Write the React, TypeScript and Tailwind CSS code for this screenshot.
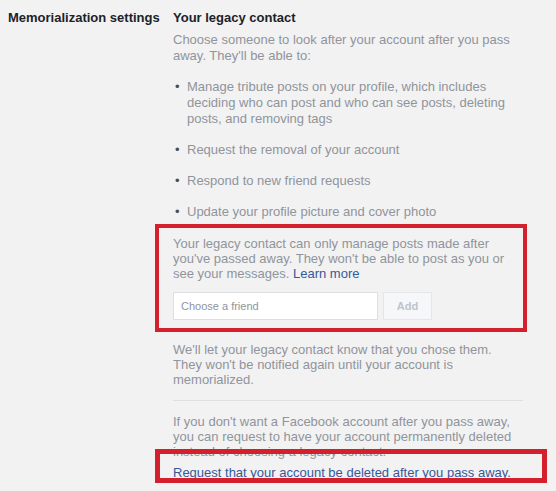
import React from 'react';

const permissions = [
  'Manage tribute posts on your profile, which includes deciding who can post and who can see posts, deleting posts, and removing tags',
  'Request the removal of your account',
  'Respond to new friend requests',
  'Update your profile picture and cover photo',
];

const App = () => {
  return (
    <div className="w-[556px] h-[491px] overflow-hidden bg-[#f2f2f2] font-['Liberation_Sans',Arial,sans-serif] text-[13px] leading-[16px]">
      <div className="flex pt-[10px]">
        {/* Section label */}
        <div className="w-[173px] shrink-0 pl-[8px] font-bold text-[#1d2129]">
          Memorialization settings
        </div>

        <div className="w-[350px] text-[#90949c]">
          <h3 className="font-bold text-[#1d2129]">Your legacy contact</h3>
          <p className="mt-[6px]">
            Choose someone to look after your account after you pass away.
            They'll be able to:
          </p>

          <ul className="mt-[15px] flex flex-col gap-[15px]">
            {permissions.map((item) => (
              <li key={item} className="flex">
                <span className="w-[14px] shrink-0 pl-[2px] text-[#4b4f56]">•</span>
                <span>{item}</span>
              </li>
            ))}
          </ul>

          {/* Highlighted block */}
          <div className="relative mt-[16px] leading-[15px]">
            <div className="pointer-events-none absolute -top-[12px] -bottom-[12px] -left-[18px] -right-[4px] border-[4px] border-[#d4202c]" />
            <p>
              Your legacy contact can only manage posts made after you've passed
              away. They won't be able to post as you or see your messages.{' '}
              <a href="#" className="text-[#365899]">
                Learn more
              </a>
            </p>
            <div className="mt-[11px] flex gap-[5px]">
              <input
                type="text"
                placeholder="Choose a friend"
                className="h-[28px] w-[205px] border border-[#dddfe2] bg-white px-[7px] text-[11px] text-[#1d2129] placeholder:text-[#90949c] outline-none"
              />
              <button
                type="button"
                disabled
                className="h-[28px] w-[49px] border border-[#e5e6e9] bg-[#f6f7f9] text-[11px] font-bold text-[#bec3c9]"
              >
                Add
              </button>
            </div>
          </div>

          <div className="leading-[15px]">
            <p className="mt-[22px]">
              We'll let your legacy contact know that you chose them. They won't
              be notified again until your account is memorialized.
            </p>

            <div className="mt-[13px] h-px bg-[#dddfe2]" />

            <p className="mt-[13px]">
              If you don't want a Facebook account after you pass away, you can
              request to have your account permanently deleted instead of
              choosing a legacy contact.
            </p>

            <div className="relative mt-[6px]">
              <a href="#" className="text-[#365899]">
                Request that your account be deleted after you pass away.
              </a>
              <div className="pointer-events-none absolute -top-[16px] -bottom-[3px] -left-[18px] -right-[24px] border-[5px] border-[#d4202c]" />
            </div>
          </div>
        </div>
      </div>
    </div>
  );
};

export default App;
